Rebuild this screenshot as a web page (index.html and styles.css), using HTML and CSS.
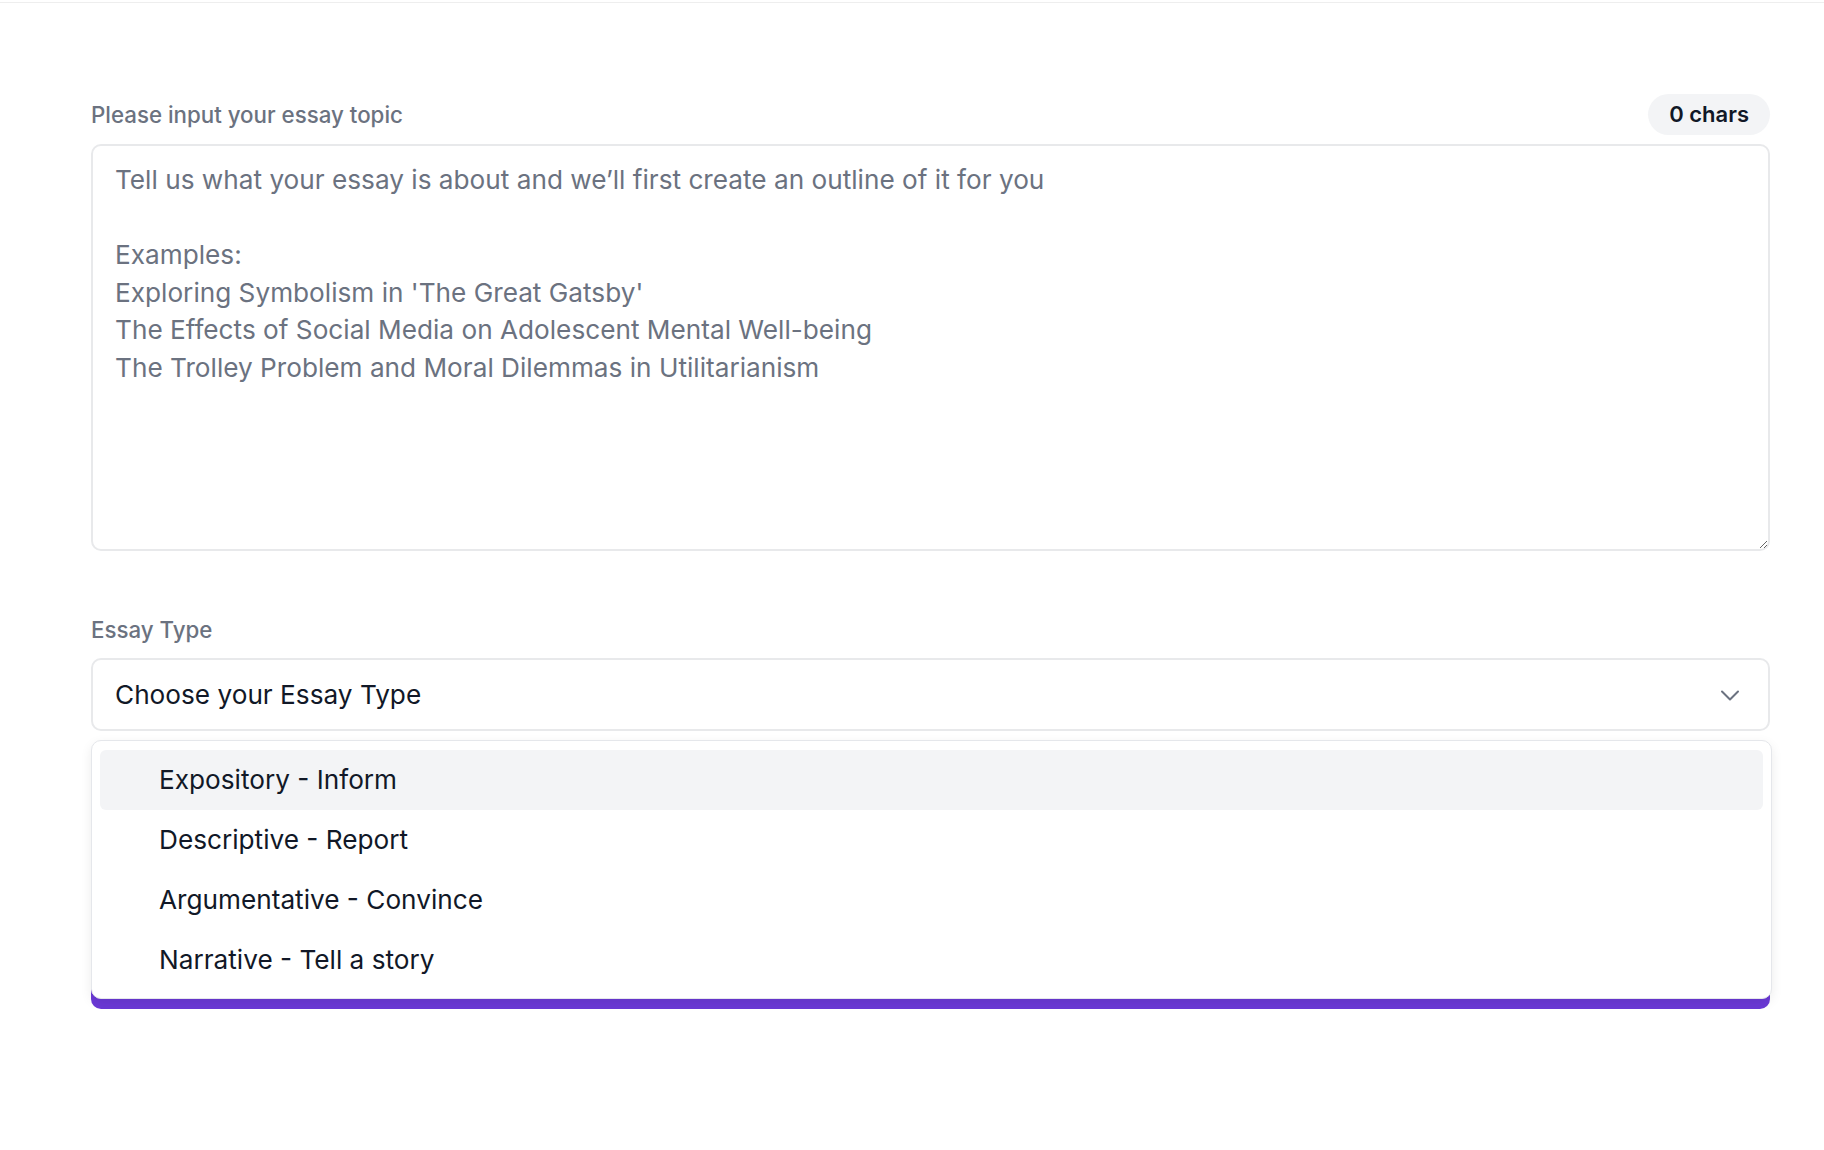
FILE: index.html
```html
<!DOCTYPE html>
<html>
<head>
    <title>Essay Writer</title>
    <link rel="stylesheet" href="styles.css">
</head>
<body>
    <div class="topbar"></div>
    <div class="page">
        <div class="field">
            <div class="field-head">
                <label for="topic" class="field-label">Please input your essay topic</label>
                <span class="counter">0 chars</span>
            </div>
            <textarea id="topic" class="topic-input" placeholder="Tell us what your essay is about and we’ll first create an outline of it for you&#10;&#10;Examples:&#10;Exploring Symbolism in 'The Great Gatsby'&#10;The Effects of Social Media on Adolescent Mental Well-being&#10;The Trolley Problem and Moral Dilemmas in Utilitarianism"></textarea>
        </div>

        <div class="field field-type">
            <label class="field-label type-label">Essay Type</label>
            <div class="select-wrap">
                <button class="select-btn" type="button">
                    <span>Choose your Essay Type</span>
                    <svg class="chevron" width="24" height="24" viewBox="0 0 24 24" fill="none">
                        <path d="M4 8.5l8 8 8-8" stroke="#6b7280" stroke-width="2" stroke-linecap="round" stroke-linejoin="round"/>
                    </svg>
                </button>
                <ul class="options">
                    <li class="option active">Expository - Inform</li>
                    <li class="option">Descriptive - Report</li>
                    <li class="option">Argumentative - Convince</li>
                    <li class="option">Narrative - Tell a story</li>
                </ul>
            </div>
        </div>

        <button class="submit" type="button">Generate Outline</button>
    </div>
</body>
</html>
```

FILE: styles.css
```css
body {
    margin: 0;
    font-family: Inter, "Noto Sans", sans-serif;
    background-color: #fff;
    color: #111827;
}
.topbar {
    height: 2px;
    border-bottom: 1px solid #eeeeee;
}
.page {
    padding: 91px 54px 0 91px;
}
.field-head {
    display: flex;
    justify-content: space-between;
    align-items: center;
    margin-bottom: 9px;
}
.field-label {
    display: block;
    font-size: 22.3px;
    line-height: 28px;
    font-weight: 500;
    color: #6b7280;
}
.counter {
    background-color: #f3f4f6;
    border-radius: 999px;
    padding: 0 21px;
    height: 41px;
    line-height: 41px;
    font-size: 22px;
    font-weight: 600;
    color: #111827;
}
.topic-input {
    display: block;
    width: 100%;
    box-sizing: border-box;
    height: 407px;
    padding: 15px 22px;
    border: 2px solid #e8e9eb;
    border-radius: 10px;
    font-family: inherit;
    font-size: 26.2px;
    line-height: 37.5px;
    color: #111827;
    resize: vertical;
    outline: none;
}
.topic-input::placeholder {
    color: #6b7280;
}
.field-type {
    margin-top: 65px;
}
.type-label {
    margin-bottom: 14px;
}
.select-wrap {
    position: relative;
}
.select-btn {
    display: flex;
    justify-content: space-between;
    align-items: center;
    width: 100%;
    height: 73px;
    padding: 0 26px 0 22px;
    background-color: #fff;
    border: 2px solid #e8e9eb;
    border-radius: 10px;
    font-family: inherit;
    font-size: 26.2px;
    color: #111827;
    cursor: pointer;
}
.options {
    position: absolute;
    left: 0;
    right: -2px;
    top: calc(100% + 9px);
    margin: 0;
    padding: 9px 8px 8px;
    list-style: none;
    background-color: #fff;
    border: 1px solid #e5e7eb;
    border-radius: 10px;
    box-shadow: 0 4px 12px rgba(0, 0, 0, 0.08);
    z-index: 10;
}
.option {
    height: 60px;
    line-height: 60px;
    padding-left: 59px;
    border-radius: 6px;
    font-size: 26.2px;
    color: #111827;
    cursor: pointer;
}
.option.active {
    background-color: #f3f4f6;
}
.submit {
    display: block;
    width: 100%;
    height: 64px;
    margin-top: 214px;
    background-color: #6b39d6;
    color: #fff;
    border: none;
    border-radius: 10px;
    font-family: inherit;
    font-size: 22px;
    font-weight: 600;
}
```
